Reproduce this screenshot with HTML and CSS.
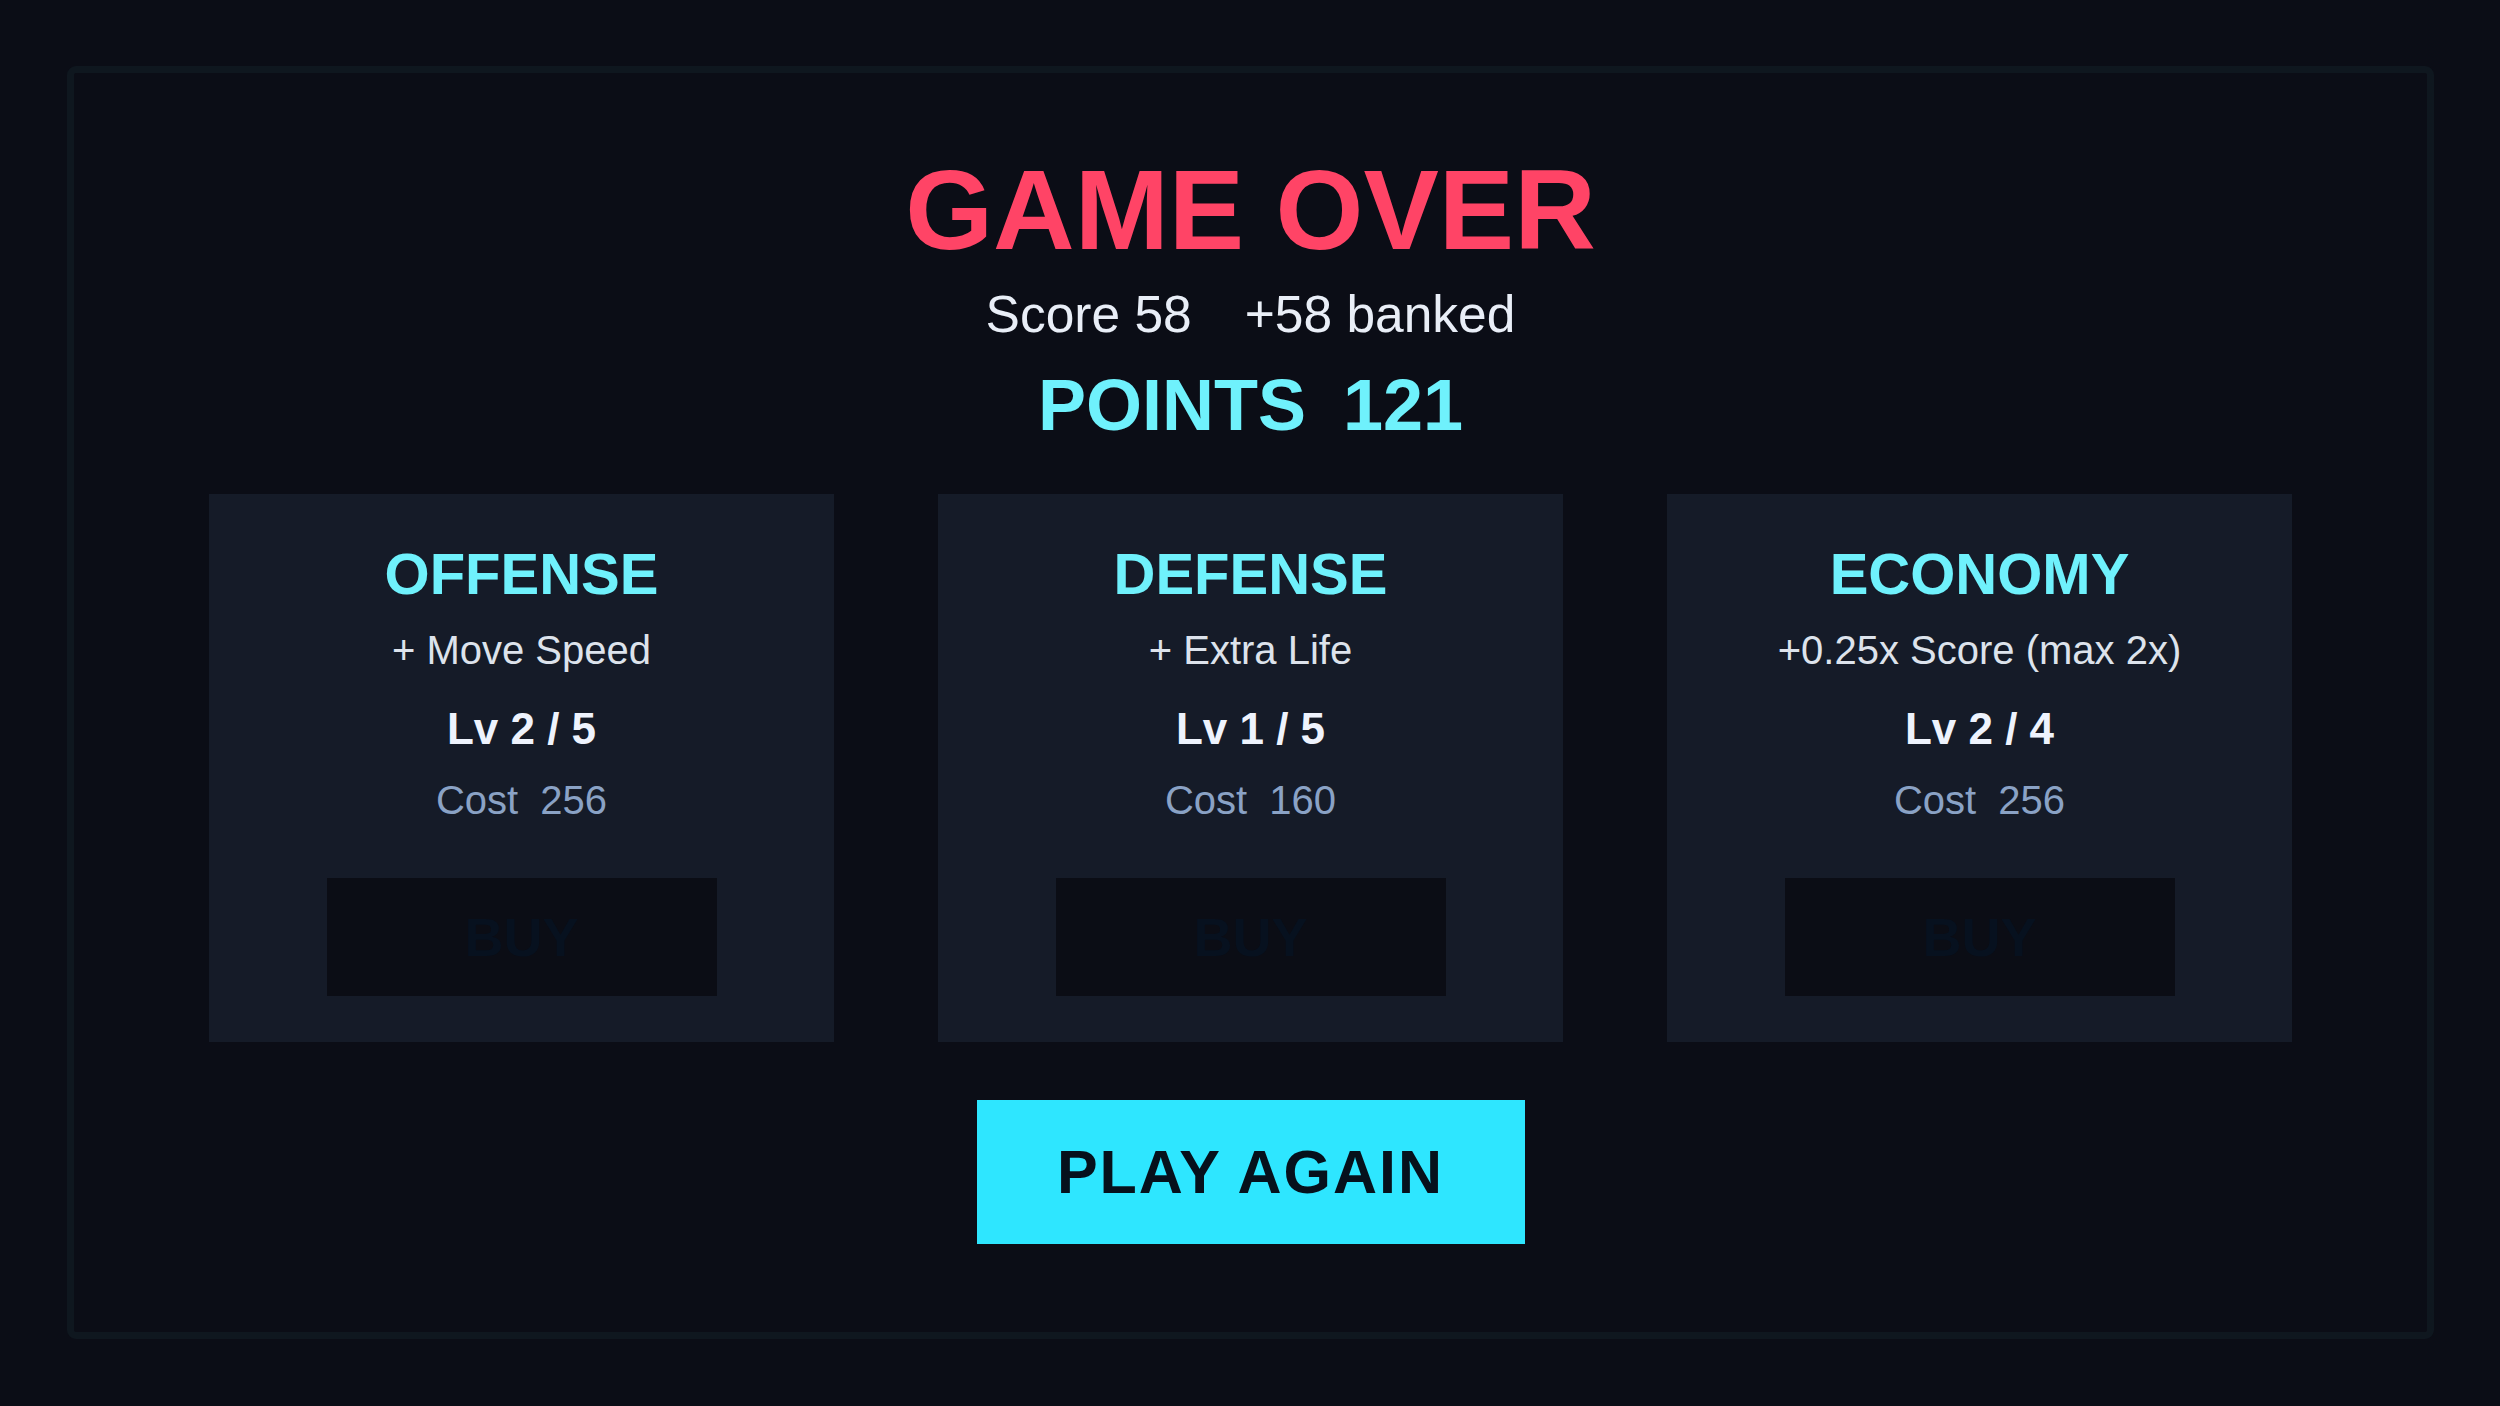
FILE: index.html
```html
<!DOCTYPE html>
<html lang="en">
<head>
<meta charset="utf-8">
<title>Game Over</title>
<link rel="stylesheet" href="styles.css">
</head>
<body>
<main class="frame">
  <h1 class="title">GAME OVER</h1>
  <div class="score-line">
    <span>Score 58</span>
    <span>+58 banked</span>
  </div>
  <div class="points-line">
    <span>POINTS</span>
    <span>121</span>
  </div>
  <section class="shop">
    <div class="card">
      <h2 class="card-title">OFFENSE</h2>
      <div class="card-desc">+ Move Speed</div>
      <div class="card-level">Lv 2 / 5</div>
      <div class="card-cost">Cost  256</div>
      <button class="buy">BUY</button>
    </div>
    <div class="card">
      <h2 class="card-title">DEFENSE</h2>
      <div class="card-desc">+ Extra Life</div>
      <div class="card-level">Lv 1 / 5</div>
      <div class="card-cost">Cost  160</div>
      <button class="buy">BUY</button>
    </div>
    <div class="card">
      <h2 class="card-title">ECONOMY</h2>
      <div class="card-desc">+0.25x Score (max 2x)</div>
      <div class="card-level">Lv 2 / 4</div>
      <div class="card-cost">Cost  256</div>
      <button class="buy">BUY</button>
    </div>
  </section>
  <button class="play">PLAY AGAIN</button>
</main>
</body>
</html>
```
FILE: styles.css
```css
html, body {
  margin: 0;
  padding: 0;
  background: #0b0d16;
}

body {
  padding: 66px 66px 67px 67px;
  font-family: "Liberation Sans", Arial, Helvetica, sans-serif;
}

.frame {
  box-sizing: border-box;
  width: 2367px;
  height: 1273px;
  border: 7px solid #0f171f;
  border-radius: 9px;
  padding-top: 81px;
  display: flex;
  flex-direction: column;
  align-items: center;
}

.title {
  margin: 0;
  font-size: 113px;
  line-height: 113px;
  font-weight: 700;
  color: #ff4466;
}

.score-line {
  margin-top: 17px;
  display: flex;
  gap: 53px;
  font-size: 51.5px;
  line-height: 60px;
  color: #e9eef7;
}

.points-line {
  margin-top: 21px;
  display: flex;
  gap: 37px;
  font-size: 72px;
  line-height: 80px;
  font-weight: 700;
  color: #6ff1fc;
}

.shop {
  margin-top: 49px;
  display: flex;
  gap: 104px;
}

.card {
  box-sizing: border-box;
  width: 625px;
  height: 548px;
  background: #151b28;
  padding-top: 45px;
  display: flex;
  flex-direction: column;
  align-items: center;
}

.card-title {
  margin: 0;
  font-size: 58px;
  line-height: 70px;
  font-weight: 700;
  color: #6ff1fc;
}

.card-desc {
  margin-top: 16px;
  font-size: 40px;
  line-height: 50px;
  color: #dde3ec;
}

.card-level {
  margin-top: 29px;
  font-size: 44px;
  line-height: 50px;
  font-weight: 700;
  color: #eef3fd;
}

.card-cost {
  margin-top: 21px;
  font-size: 40px;
  line-height: 50px;
  color: #8aa2c5;
  white-space: pre;
}

.buy {
  margin-top: 53px;
  width: 390px;
  height: 118px;
  border: none;
  padding: 0;
  background: #0b0d15;
  color: #07111f;
  font-family: inherit;
  font-size: 54px;
  font-weight: 700;
}

.play {
  margin-top: 58px;
  width: 548px;
  height: 144px;
  border: none;
  padding: 0;
  background: #2ee6ff;
  color: #06111c;
  font-family: inherit;
  font-size: 61px;
  letter-spacing: 2px;
  font-weight: 700;
}
```
